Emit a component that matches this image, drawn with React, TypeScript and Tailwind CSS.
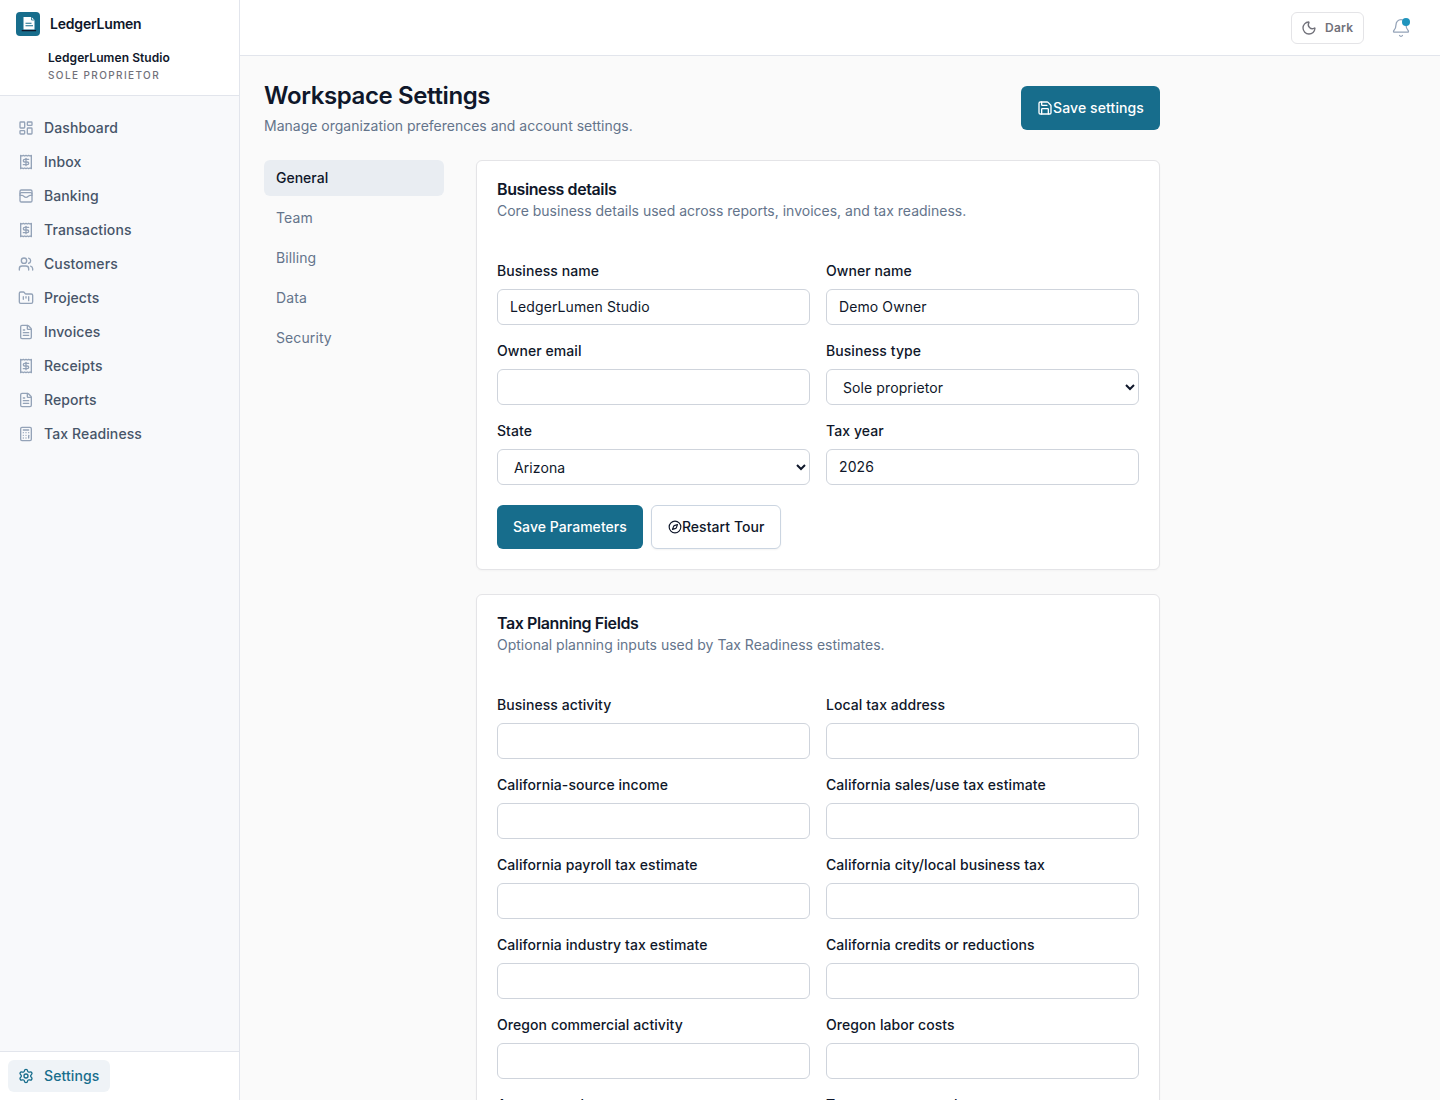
import React from 'react';
import {
  Bell,
  Calculator,
  Compass,
  FileText,
  FolderKanban,
  LayoutDashboard,
  Moon,
  Receipt,
  Save,
  Settings,
  Users,
  WalletCards,
} from 'lucide-react';

const NAV = [
  { label: 'Dashboard', icon: LayoutDashboard },
  { label: 'Inbox', icon: Receipt },
  { label: 'Banking', icon: WalletCards },
  { label: 'Transactions', icon: Receipt },
  { label: 'Customers', icon: Users },
  { label: 'Projects', icon: FolderKanban },
  { label: 'Invoices', icon: FileText },
  { label: 'Receipts', icon: Receipt },
  { label: 'Reports', icon: FileText },
  { label: 'Tax Readiness', icon: Calculator },
];

const TABS = ['General', 'Team', 'Billing', 'Data', 'Security'];

const TAX_FIELDS = [
  'Business activity',
  'Local tax address',
  'California-source income',
  'California sales/use tax estimate',
  'California payroll tax estimate',
  'California city/local business tax',
  'California industry tax estimate',
  'California credits or reductions',
  'Oregon commercial activity',
  'Oregon labor costs',
  'Average cash',
  'Texas revenue total',
];

const inputClass = 'h-9 w-full rounded-md border border-[#cfd4dc] bg-white px-3 pb-0.5 text-sm tracking-[0.1px] text-[#0f172a]';
const selectClass = 'h-9 w-full rounded-md border border-[#cfd4dc] bg-white pl-3 pr-0.5 text-sm tracking-[0.1px] text-[#0f172a]';
const labelClass = 'mb-2 block text-sm font-medium leading-5 tracking-[0.07px] text-[#0f172a]';

function Field({ label, children }: { label: string; children: React.ReactNode }) {
  return (
    <div>
      <label className={labelClass}>{label}</label>
      {children}
    </div>
  );
}

function Sidebar() {
  return (
    <aside className="flex h-[1100px] w-[240px] shrink-0 flex-col border-r border-[#e2e5ec] bg-[#f8f9fb]">
      <div className="h-[96px] border-b border-[#e2e5ec] bg-white px-4 pt-3">
        <div className="flex items-center gap-2.5">
          <div className="flex h-6 w-6 items-center justify-center rounded bg-[#176d8c]">
            <svg viewBox="0 0 24 24" className="h-6 w-6">
              <path d="M7.5 5h8l3 3v9.5h-11z" fill="#fff" />
              <path d="M15.5 5v3h3" fill="none" stroke="#176d8c" strokeWidth="0.8" />
              <path d="M9.5 11.3h6M9.5 13.8h7.5" stroke="#176d8c" strokeWidth="1.1" />
              <path d="M5.7 18.6h14.4" stroke="#0f172a" strokeWidth="1.3" />
            </svg>
          </div>
          <span className="text-sm font-semibold tracking-[-0.2px] text-[#0f172a]">LedgerLumen</span>
        </div>
        <div className="mt-[14px] pl-8">
          <div className="text-xs font-semibold leading-4 tracking-[0.07px] text-[#0f172a]">LedgerLumen Studio</div>
          <div className="mt-px text-[10px] font-medium leading-4 tracking-[0.14em] text-[#71717a]">SOLE PROPRIETOR</div>
        </div>
      </div>

      <nav className="flex flex-1 flex-col gap-0.5 px-2 pt-4">
        {NAV.map((item) => {
          const Icon = item.icon;
          return (
            <div key={item.label} className="flex h-8 items-center gap-2.5 px-2.5 text-sm font-medium tracking-[0.1px] text-[#475569]">
              <Icon className="h-4 w-4 text-[#94a3b8]" />
              {item.label}
            </div>
          );
        })}
      </nav>

      <div className="h-[49px] border-t border-[#e2e5ec] bg-white px-2 pt-2">
        <div className="flex h-8 w-[102px] items-center gap-2.5 rounded-md bg-[#eff3f7] px-2.5 text-sm font-medium tracking-[0.1px] text-[#176d8c]">
          <Settings className="h-4 w-4" />
          Settings
        </div>
      </div>
    </aside>
  );
}

export default function App() {
  return (
    <div className="flex h-[1100px] overflow-hidden bg-[#fafafa] font-['Inter',sans-serif]">
      <Sidebar />

      <div className="flex min-w-0 flex-1 flex-col">
        <header className="flex h-14 shrink-0 items-center justify-end border-b border-[#e2e5ec] bg-white pr-6">
          <button className="flex h-8 w-[73px] items-center gap-2 rounded-md border border-[#e4e4e7] bg-white pl-[9px] text-xs font-semibold tracking-[0.25px] text-[#71717a]">
            <Moon className="h-4 w-4" />
            Dark
          </button>
          <div className="relative ml-[27px] mr-[5px] h-5 w-5 text-[#94a3b8]">
            <Bell className="h-5 w-5" strokeWidth={1.5} />
            <span className="absolute right-px top-0 h-2 w-2 rounded-full bg-[#1f94bd]" />
          </div>
        </header>

        <main className="w-[944px] px-6 pt-6">
          <div className="flex items-start justify-between">
            <div>
              <h1 className="text-2xl font-semibold leading-8 tracking-[-0.38px] text-[#0f172a]">Workspace Settings</h1>
              <p className="mt-1 text-sm leading-5 text-[#64748b]">Manage organization preferences and account settings.</p>
            </div>
            <button className="mt-1.5 flex h-11 items-center rounded-md bg-[#176d8c] px-4 text-sm font-medium tracking-[0.1px] text-white">
              <Save className="h-4 w-4" />
              Save settings
            </button>
          </div>

          <div className="mt-6 flex gap-8">
            <div className="flex w-[180px] shrink-0 flex-col gap-1">
              {TABS.map((tab, i) => (
                <div
                  key={tab}
                  className={
                    i === 0
                      ? 'flex h-9 items-center rounded-md bg-[#e9edf2] px-3 text-sm font-medium text-[#0f172a]'
                      : 'flex h-9 items-center rounded-md px-3 text-sm tracking-[0.1px] text-[#64748b]'
                  }
                >
                  {tab}
                </div>
              ))}
            </div>

            <div className="flex w-[684px] shrink-0 flex-col gap-6">
              <section className="rounded-md border border-[#e4e4e7] bg-white px-5 pb-5 pt-5 shadow-[0_1px_2px_rgba(0,0,0,0.03)]">
                <h2 className="text-base font-semibold leading-4 tracking-tight text-[#0f172a]">Business details</h2>
                <p className="mt-1 text-sm leading-5 text-[#64748b]">Core business details used across reports, invoices, and tax readiness.</p>
                <div className="mt-10 grid grid-cols-2 gap-x-4 gap-y-4">
                  <Field label="Business name">
                    <input className={inputClass} defaultValue="LedgerLumen Studio" />
                  </Field>
                  <Field label="Owner name">
                    <input className={inputClass} defaultValue="Demo Owner" />
                  </Field>
                  <Field label="Owner email">
                    <input className={inputClass} />
                  </Field>
                  <Field label="Business type">
                    <select className={selectClass} defaultValue="Sole proprietor">
                      <option>Sole proprietor</option>
                    </select>
                  </Field>
                  <Field label="State">
                    <select className={selectClass} defaultValue="Arizona">
                      <option>Arizona</option>
                    </select>
                  </Field>
                  <Field label="Tax year">
                    <input className={inputClass} defaultValue="2026" />
                  </Field>
                </div>
                <div className="mt-5 flex gap-2">
                  <button className="h-11 rounded-md bg-[#176d8c] px-4 text-sm font-medium tracking-[0.05px] text-white">Save Parameters</button>
                  <button className="flex h-11 items-center rounded-md border border-[#cbd5e1] bg-white px-4 text-sm font-medium tracking-[0.05px] text-[#0f172a] shadow-[0_1px_2px_rgba(0,0,0,0.05)]">
                    <Compass className="h-3.5 w-3.5" />
                    Restart Tour
                  </button>
                </div>
              </section>

              <section className="rounded-md border border-[#e4e4e7] bg-white px-5 pb-5 pt-5 shadow-[0_1px_2px_rgba(0,0,0,0.03)]">
                <h2 className="text-base font-semibold leading-4 tracking-tight text-[#0f172a]">Tax Planning Fields</h2>
                <p className="mt-1 text-sm leading-5 text-[#64748b]">Optional planning inputs used by Tax Readiness estimates.</p>
                <div className="mt-10 grid grid-cols-2 gap-x-4 gap-y-4">
                  {TAX_FIELDS.map((label) => (
                    <Field key={label} label={label}>
                      <input className={inputClass} />
                    </Field>
                  ))}
                </div>
              </section>
            </div>
          </div>
        </main>
      </div>
    </div>
  );
}
